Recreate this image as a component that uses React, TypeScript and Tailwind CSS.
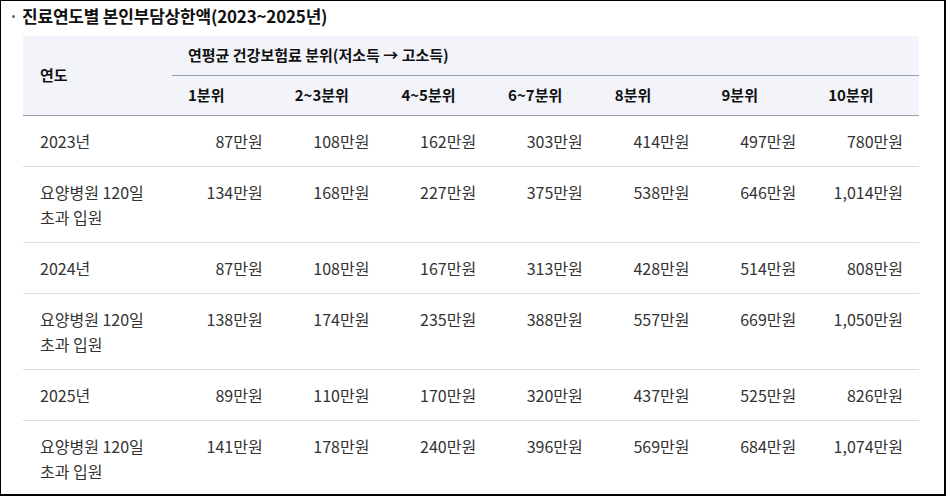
import React from 'react';

const cols = ['1분위', '2~3분위', '4~5분위', '6~7분위', '8분위', '9분위', '10분위'];

const rows: { label: string; values: string[] }[] = [
  { label: '2023년', values: ['87', '108', '162', '303', '414', '497', '780'] },
  { label: '요양병원 120일 초과 입원', values: ['134', '168', '227', '375', '538', '646', '1,014'] },
  { label: '2024년', values: ['87', '108', '167', '313', '428', '514', '808'] },
  { label: '요양병원 120일 초과 입원', values: ['138', '174', '235', '388', '557', '669', '1,050'] },
  { label: '2025년', values: ['89', '110', '170', '320', '437', '525', '826'] },
  { label: '요양병원 120일 초과 입원', values: ['141', '178', '240', '396', '569', '684', '1,074'] },
];

export default function App() {
  return (
    <div
      className="w-[946px] h-[496px] overflow-hidden bg-white border-t border-l border-r-2 border-b-2 border-black text-[#333]"
      style={{ fontFamily: '"Noto Sans CJK KR", "Noto Sans", sans-serif' }}
    >
      <div className="flex items-center h-[29px] pl-[11px] gap-[7px]">
        <span className="block w-[3px] h-[3px] rounded-full bg-[#666] mt-[1px]" />
        <h2 className="text-[17px] font-bold text-[#111] leading-none tracking-[-0.2px]">
          진료연도별 본인부담상한액(2023~2025년)
        </h2>
      </div>
      <div className="pl-[22px] pr-[25px] pt-[6px]">
        <table className="w-full table-fixed border-collapse">
          <colgroup>
            <col className="w-[149px]" />
            {cols.map(c => <col key={c} />)}
          </colgroup>
          <thead className="bg-[#f3f4f9] text-[#111]">
            <tr className="h-[39px]">
              <th rowSpan={2} className="text-left align-middle pl-[17px] text-[15px] font-bold border-b border-[#9a9db0]">
                연도
              </th>
              <th colSpan={7} className="text-left pl-[16px] text-[15px] font-bold border-b border-[#9a9db0]">
                연평균 건강보험료 분위(저소득 → 고소득)
              </th>
            </tr>
            <tr className="h-[40px]">
              {cols.map(c => (
                <th key={c} className="text-left pl-[16px] text-[15px] font-bold border-b border-[#9a9db0]">
                  {c}
                </th>
              ))}
            </tr>
          </thead>
          <tbody className="text-[16px] leading-[25px]">
            {rows.map((r, i) => (
              <tr key={i} className={i < rows.length - 1 ? 'border-b border-[#dcdcdc]' : ''}>
                <td className="pl-[17px] pr-[16px] pt-[13px] pb-[12px] align-top">{r.label}</td>
                {r.values.map((v, j) => (
                  <td key={j} className="text-right pr-[16px] pt-[13px] pb-[12px] align-top">
                    {v}만원
                  </td>
                ))}
              </tr>
            ))}
          </tbody>
        </table>
      </div>
    </div>
  );
}
